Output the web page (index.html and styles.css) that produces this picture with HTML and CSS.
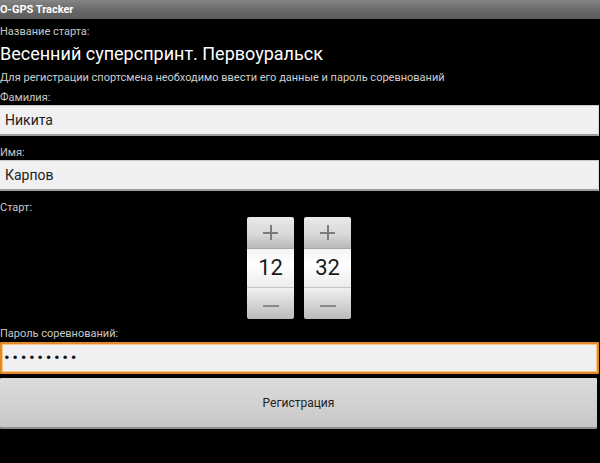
FILE: index.html
```html
<!DOCTYPE html>
<html lang="ru">
<head>
<meta charset="utf-8">
<title>O-GPS Tracker</title>
<link rel="stylesheet" href="styles.css">
</head>
<body>
<div class="titlebar">O-GPS Tracker</div>
<main class="form">
  <div class="label first">Название старта:</div>
  <div class="race-name">Весенний суперспринт. Первоуральск</div>
  <div class="hint">Для регистрации спортсмена необходимо ввести его данные и пароль соревнований</div>
  <div class="label">Фамилия:</div>
  <div class="field">Никита</div>
  <div class="label gap">Имя:</div>
  <div class="field">Карпов</div>
  <div class="label gap">Старт:</div>
  <div class="pickers">
    <div class="picker">
      <div class="pick-btn inc"><span class="plus"></span></div>
      <div class="pick-value">12</div>
      <div class="pick-btn dec"><span class="minus"></span></div>
    </div>
    <div class="picker">
      <div class="pick-btn inc"><span class="plus"></span></div>
      <div class="pick-value">32</div>
      <div class="pick-btn dec"><span class="minus"></span></div>
    </div>
  </div>
  <div class="label pass-label">Пароль соревнований:</div>
  <div class="field focused"><span class="dots">•••••••••</span></div>
  <div class="button">Регистрация</div>
</main>
</body>
</html>
```
FILE: styles.css
```css
html, body {
  margin: 0;
  padding: 0;
  background: #000;
  width: 600px;
  height: 463px;
  overflow: hidden;
  font-family: Roboto, "Noto Sans", "DejaVu Sans", sans-serif;
}

.titlebar {
  height: 19px;
  line-height: 19px;
  background: linear-gradient(#858585, #666 60%, #5c5c5c);
  color: #fff;
  font-weight: bold;
  font-size: 11px;
  box-sizing: border-box;
}

.form {
  display: flex;
  flex-direction: column;
}

.label {
  font-size: 11px;
  line-height: 14px;
  height: 14px;
  color: #c9c9c9;
}

.label.first {
  margin-top: 6px;
}

.label.gap {
  margin-top: 10px;
}

.race-name {
  margin-top: 3px;
  font-size: 18px;
  line-height: 24px;
  height: 24px;
  color: #fff;
}

.hint {
  margin-top: 5px;
  font-size: 11px;
  line-height: 14px;
  height: 14px;
  color: #cfcfcf;
  margin-bottom: 6px;
}

.field {
  height: 31px;
  box-sizing: border-box;
  width: 599px;
  background: #f0eff2;
  border-top: 1px solid #c8c8c8;
  border-bottom: 2px solid #9c9c9c;
  border-right: 1px solid #d8d8d8;
  font-size: 14px;
  line-height: 28px;
  color: #1c1c1c;
  padding-left: 5px;
}

.pickers {
  margin-top: 2px;
  display: flex;
  justify-content: center;
  gap: 10px;
  padding-right: 2px;
}

.picker {
  width: 47px;
  height: 102px;
  display: flex;
  flex-direction: column;
  border-radius: 2px;
  overflow: hidden;
}

.pick-btn {
  display: flex;
  align-items: center;
  justify-content: center;
}

.pick-btn.inc {
  background: linear-gradient(#e9e9e9, #d9d9d9 55%, #b9b9b9);
  border-bottom: 1px solid #a8a8a8;
  height: 31px;
}

.pick-btn.dec {
  background: linear-gradient(#f1f1f1, #d0d0d0 60%, #bababa);
  border-top: 1px solid #c4c4c4;
  height: 31px;
}

.pick-value {
  height: 38px;
  background: linear-gradient(#f4f4f4, #ffffff 40%, #ececec);
  color: #1a1a1a;
  font-size: 22px;
  line-height: 38px;
  text-align: center;
}

.plus {
  position: relative;
  width: 15px;
  height: 15px;
}

.plus::before,
.plus::after {
  content: "";
  position: absolute;
  background: #7b7b7b;
}

.plus::before {
  left: 0;
  top: 6.5px;
  width: 15px;
  height: 2px;
}

.plus::after {
  left: 6.5px;
  top: 0;
  width: 2px;
  height: 15px;
}

.minus {
  width: 16px;
  height: 2px;
  background: #8a8a8a;
  margin-top: 4px;
}

.pass-label {
  margin-top: 8px;
  margin-bottom: 1px;
}

.field.focused {
  height: 32px;
  border: 2px solid #e4892a;
  box-shadow: inset 0 0 0 1px #f6c77e;
  border-radius: 1px;
  padding-left: 2px;
  line-height: 27px;
}

.dots {
  font-size: 17px;
  letter-spacing: 2.6px;
  color: #111;
}

.button {
  margin-top: 4px;
  width: 597px;
  height: 51px;
  box-sizing: border-box;
  background: linear-gradient(#dcdcdc, #d2d2d2 50%, #c6c6c6);
  border-bottom: 2px solid #8e8e8e;
  border-radius: 1px;
  text-align: center;
  font-size: 12px;
  line-height: 50px;
  color: #222;
}
```
